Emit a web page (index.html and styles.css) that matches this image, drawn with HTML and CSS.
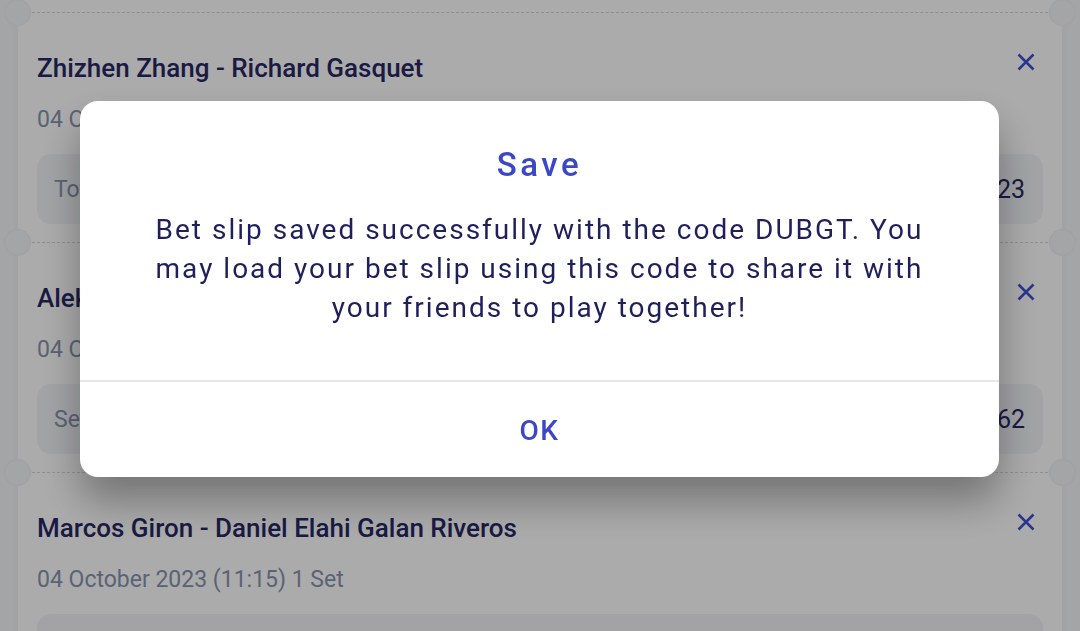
FILE: index.html
```html
<!DOCTYPE html>
<html lang="en">
<head>
    <meta charset="UTF-8">
    <meta name="viewport" content="width=device-width, initial-scale=1.0">
    <title>Bet slip</title>
    <link rel="stylesheet" href="styles.css">
</head>
<body>
    <div class="slip">
        <div class="leg">
            <div class="leg-head">
                <div class="leg-title">Zhizhen Zhang - Richard Gasquet</div>
                <button type="button" class="leg-remove" aria-label="Remove">
                    <svg viewBox="0 0 20 20" width="20" height="20"><path d="M2.5 2.5 L17.5 17.5 M17.5 2.5 L2.5 17.5"/></svg>
                </button>
            </div>
            <div class="leg-date">04 October 2023 (11:15) 1 Set</div>
            <div class="pick">
                <span class="pick-name">Total Games: Over 9.5</span>
                <span class="pick-odd">1.23</span>
            </div>
        </div>
        <div class="leg">
            <div class="leg-head">
                <div class="leg-title">Aleksandar Vukic - Jordan Thompson</div>
                <button type="button" class="leg-remove" aria-label="Remove">
                    <svg viewBox="0 0 20 20" width="20" height="20"><path d="M2.5 2.5 L17.5 17.5 M17.5 2.5 L2.5 17.5"/></svg>
                </button>
            </div>
            <div class="leg-date">04 October 2023 (11:00) 1 Set</div>
            <div class="pick">
                <span class="pick-name">Set Winner: Aleksandar Vukic</span>
                <span class="pick-odd">1.62</span>
            </div>
        </div>
        <div class="leg">
            <div class="leg-head">
                <div class="leg-title">Marcos Giron - Daniel Elahi Galan Riveros</div>
                <button type="button" class="leg-remove" aria-label="Remove">
                    <svg viewBox="0 0 20 20" width="20" height="20"><path d="M2.5 2.5 L17.5 17.5 M17.5 2.5 L2.5 17.5"/></svg>
                </button>
            </div>
            <div class="leg-date">04 October 2023 (11:15) 1 Set</div>
            <div class="pick">
                <span class="pick-name">Set Winner: Marcos Giron</span>
                <span class="pick-odd">1.85</span>
            </div>
        </div>
    </div>

    <div class="modal-backdrop">
        <div class="modal">
            <div class="modal-body">
                <h2 class="modal-title">Save</h2>
                <p class="modal-text">Bet slip saved successfully with the code DUBGT. You may load your bet slip using this code to share it with your friends to play together!</p>
            </div>
            <button type="button" class="modal-btn">OK</button>
        </div>
    </div>
</body>
</html>
```

FILE: styles.css
```css
body {
    margin: 0;
    padding: 0 18px;
    height: 100vh;
    overflow: hidden;
    background-color: #f5f6f9;
    font-family: Roboto, "Liberation Sans", sans-serif;
}

.slip {
    background-color: #ffffff;
    padding-top: 12px;
    min-height: 100%;
    box-shadow: 0 0 8px rgba(0, 0, 0, 0.04);
}

.leg {
    position: relative;
    border-top: 1px dashed #d3d6dc;
    margin: 0 14px;
    padding: 39px 5px 18px;
}

/* ticket notches on the separator line */
.leg::before,
.leg::after {
    content: "";
    position: absolute;
    top: -14px;
    width: 27px;
    height: 27px;
    border-radius: 50%;
    background-color: #f5f6f9;
    box-shadow: inset 0 0 3px rgba(0, 0, 0, 0.06);
}

.leg::before {
    left: -28px;
}

.leg::after {
    right: -28px;
}

.leg-head {
    display: flex;
    justify-content: space-between;
    align-items: flex-start;
}

.leg-title {
    font-size: 26px;
    line-height: 32px;
    font-weight: 500;
    color: #272864;
}

.leg-remove {
    border: none;
    background: none;
    padding: 0;
    margin: 0 7px 0 0;
    width: 20px;
    height: 20px;
    color: #4150d6;
}

.leg-remove svg {
    display: block;
    fill: none;
    stroke: currentColor;
    stroke-width: 2.6;
}

.leg-date {
    margin-top: 22px;
    font-size: 23px;
    line-height: 28px;
    color: #8893b0;
}

.pick {
    margin-top: 20px;
    height: 70px;
    box-sizing: border-box;
    padding: 0 18px 0 17px;
    display: flex;
    justify-content: space-between;
    align-items: center;
    background-color: #f3f4f8;
    border-radius: 14px;
}

.pick-name {
    font-size: 23px;
    color: #8893b0;
}

.pick-odd {
    font-size: 25px;
    color: #272864;
}

.modal-backdrop {
    position: fixed;
    inset: 0;
    background-color: rgba(0, 0, 0, 0.33);
    display: flex;
    justify-content: center;
    align-items: flex-start;
    padding-top: 101px;
}

.modal {
    width: 919px;
    margin-right: 1px;
    background-color: #ffffff;
    border-radius: 18px;
    box-shadow: 0 24px 40px rgba(0, 0, 0, 0.32);
    overflow: hidden;
}

.modal-body {
    padding: 42px 60px 53px;
    text-align: center;
    border-bottom: 2px solid #e6e7eb;
}

.modal-title {
    margin: 0;
    font-size: 33px;
    line-height: 44px;
    font-weight: 500;
    letter-spacing: 3.5px;
    color: #3b47c6;
}

.modal-text {
    margin: 23px 0 0;
    font-size: 28px;
    line-height: 39px;
    letter-spacing: 2px;
    color: #1f1f5c;
}

.modal-btn {
    display: block;
    width: 100%;
    height: 95px;
    padding-top: 3px;
    border: none;
    background: none;
    font-family: inherit;
    font-size: 28px;
    font-weight: 500;
    letter-spacing: 1.5px;
    color: #3b47c6;
}
```
